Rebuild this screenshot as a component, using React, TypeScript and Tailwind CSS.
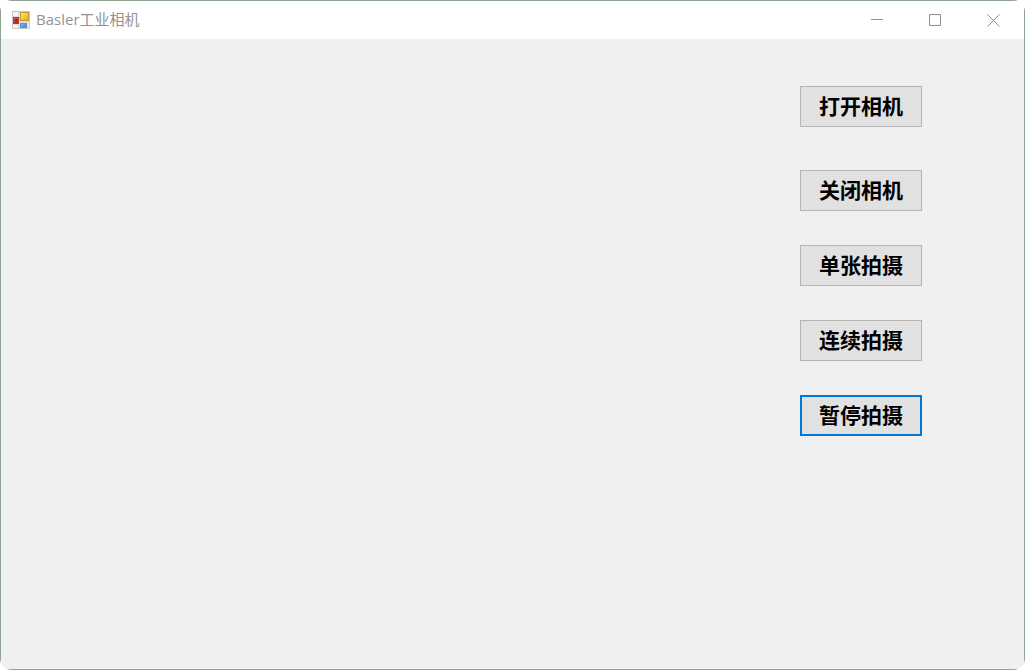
import React from "react";

function AppIcon() {
  return (
    <svg width="18" height="18" viewBox="0 0 18 18" aria-hidden="true">
      <defs>
        <linearGradient id="gold" x1="0" y1="0" x2="1" y2="1">
          <stop offset="0" stopColor="#ffe98a" />
          <stop offset="1" stopColor="#e9a800" />
        </linearGradient>
        <linearGradient id="red" x1="0" y1="0" x2="1" y2="1">
          <stop offset="0" stopColor="#e0685c" />
          <stop offset="1" stopColor="#a81818" />
        </linearGradient>
        <linearGradient id="blue" x1="0" y1="0" x2="1" y2="1">
          <stop offset="0" stopColor="#8fbcff" />
          <stop offset="1" stopColor="#3a78de" />
        </linearGradient>
      </defs>
      <rect x="0.5" y="0.5" width="17" height="17" fill="#dedede" stroke="#c8c8c8" />
      <rect x="1" y="1" width="5" height="4" fill="#f4f4f4" />
      <rect x="1" y="14" width="5" height="3" fill="#f4f4f4" />
      <rect x="16" y="12" width="1" height="5" fill="#f0f0f0" />
      <rect x="8.5" y="1.5" width="8" height="8" fill="url(#gold)" stroke="#c39a2c" />
      <rect x="1.5" y="6.5" width="5" height="6" fill="url(#red)" stroke="#a63a34" />
      <rect x="3" y="8" width="2" height="3" fill="#b81414" />
      <rect x="8.5" y="12.5" width="6" height="4" fill="url(#blue)" stroke="#5c8fe0" />
    </svg>
  );
}

function CaptionButton({ label, children }: { label: string; children: React.ReactNode }) {
  return (
    <button
      type="button"
      aria-label={label}
      className="flex h-full w-[58px] items-center justify-center text-[#8f8f8f] hover:bg-gray-200"
    >
      <svg width="13" height="13" viewBox="0 0 13 13" fill="none" stroke="currentColor" aria-hidden="true">
        {children}
      </svg>
    </button>
  );
}

function CameraButton({ children, focused = false }: { children: string; focused?: boolean }) {
  const edge = focused ? "border-2 border-[#0078d7]" : "border border-[#b4b4b4]";
  return (
    <button
      type="button"
      className={`flex h-[41px] w-[122px] items-center justify-center bg-[#e1e1e1] pb-1 text-[21px] leading-6 font-bold text-black ${edge}`}
    >
      {children}
    </button>
  );
}

export default function App() {
  return (
    <div className="bg-white font-['Noto_Sans_CJK_SC',sans-serif]">
      <div className="flex min-h-screen flex-col overflow-hidden rounded-xl">
        <div className="flex grow flex-col border border-[#8fa392] bg-[#f0f0f0]">
          <header className="flex h-[38px] items-center bg-white pr-[2px] pl-[11px]">
            <AppIcon />
            <h1 className="ml-[6px] grow pb-0.5 text-[15px] leading-5 text-[#929292] font-['Open_Sans','Noto_Sans_CJK_SC',sans-serif]">
              Basler工业相机
            </h1>
            <div className="flex h-full">
              <CaptionButton label="最小化">
                <path d="M0 5.5H12" />
              </CaptionButton>
              <CaptionButton label="最大化">
                <path d="M0.5 0.5H11.5V11.5H0.5Z" />
              </CaptionButton>
              <CaptionButton label="关闭">
                <path d="M0.5 0.5L12.5 12.5M12.5 0.5L0.5 12.5" />
              </CaptionButton>
            </div>
          </header>
          <main className="flex flex-col items-end gap-[43px] pt-[47px] pr-[102px]">
            <CameraButton>打开相机</CameraButton>
            <div className="flex flex-col gap-[34px]">
              <CameraButton>关闭相机</CameraButton>
              <CameraButton>单张拍摄</CameraButton>
              <CameraButton>连续拍摄</CameraButton>
              <CameraButton focused>暂停拍摄</CameraButton>
            </div>
          </main>
        </div>
      </div>
    </div>
  );
}
